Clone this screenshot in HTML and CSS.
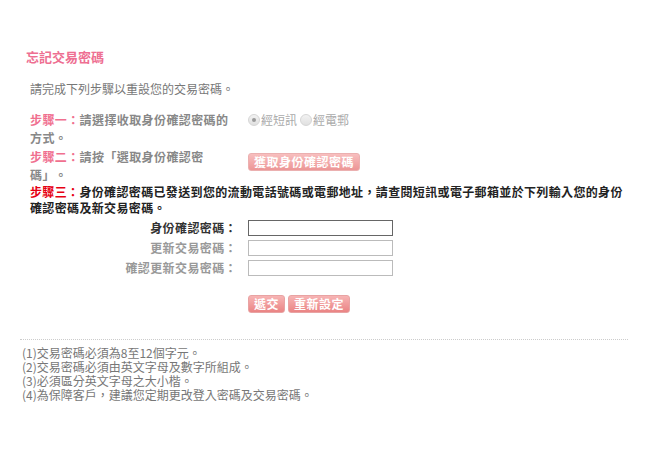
FILE: index.html
```html
<!DOCTYPE html>
<html lang="zh-Hant">
<head>
    <meta charset="UTF-8">
    <title>忘記交易密碼</title>
    <link rel="stylesheet" href="styles.css">
</head>
<body>
    <div class="page">
        <h1 class="title">忘記交易密碼</h1>
        <p class="intro">請完成下列步驟以重設您的交易密碼。</p>

        <div class="step">
            <div class="step-text"><span class="step-no">步驟一：</span>請選擇收取身份確認密碼的方式。</div>
            <div class="step-ctl">
                <label class="radio"><span class="dot checked"></span>經短訊</label>
                <label class="radio"><span class="dot"></span>經電郵</label>
            </div>
        </div>
        <div class="step">
            <div class="step-text"><span class="step-no">步驟二：</span>請按「選取身份確認密碼」。</div>
            <div class="step-ctl">
                <button class="btn btn-wide">獲取身份確認密碼</button>
            </div>
        </div>
        <div class="step3"><span class="step-no red">步驟三：</span>身份確認密碼已發送到您的流動電話號碼或電郵地址，請查閱短訊或電子郵箱並於下列輸入您的身份確認密碼及新交易密碼。</div>

        <div class="form">
            <label class="form-label active">身份確認密碼：</label>
            <input class="field active" type="text">
            <label class="form-label">更新交易密碼：</label>
            <input class="field" type="password">
            <label class="form-label">確認更新交易密碼：</label>
            <input class="field" type="password">
        </div>

        <div class="actions">
            <button class="btn">遞交</button>
            <button class="btn">重新設定</button>
        </div>

        <ol class="notes">
            <li>(1)交易密碼必須為8至12個字元。</li>
            <li>(2)交易密碼必須由英文字母及數字所組成。</li>
            <li>(3)必須區分英文字母之大小楷。</li>
            <li>(4)為保障客戶，建議您定期更改登入密碼及交易密碼。</li>
        </ol>
    </div>
</body>
</html>
```

FILE: styles.css
```css
body {
    margin: 0;
    padding: 0;
    background: #fff;
    font-family: "Noto Sans CJK TC", "Liberation Sans", sans-serif;
    font-size: 12px;
    color: #777;
    text-spacing-trim: space-all;
}
.page {
    padding: 48px 22px 0 20px;
}
.title {
    margin: 0 0 0 6px;
    font-size: 13px;
    line-height: 18px;
    color: #ee6f92;
    font-weight: bold;
}
.intro {
    margin: 15px 0 0 10px;
    line-height: 16px;
    color: #777;
}
.step {
    display: grid;
    grid-template-columns: 218px auto;
    margin: 14px 0 0 10px;
    align-items: start;
}
.step + .step {
    margin-top: 1px;
}
.step-text {
    width: 206px;
    font-weight: bold;
    line-height: 18px;
    letter-spacing: 0.4px;
    color: #888;
}
.step-no {
    color: #f0708f;
}
.step-no.red {
    color: #e60012;
}
.step-ctl {
    display: flex;
    align-items: center;
    gap: 3px;
    color: #aaa;
}
.radio {
    display: flex;
    align-items: center;
    gap: 1px;
    line-height: 18px;
}
.dot {
    width: 10px;
    height: 10px;
    border-radius: 50%;
    border: 1px solid #d6d6d6;
    background: linear-gradient(#f2f2f2, #e0e0e0);
    position: relative;
}
.dot.checked::after {
    content: "";
    position: absolute;
    left: 3px;
    top: 3px;
    width: 4px;
    height: 4px;
    border-radius: 50%;
    background: #9a9a9a;
}
.btn {
    font-family: inherit;
    font-size: 12px;
    font-weight: bold;
    color: #fff;
    height: 18px;
    line-height: 14px;
    padding: 0 5px;
    border: 1px solid #e8a3a3;
    border-radius: 3px;
    background: linear-gradient(#f7b4b4, #ea8484);
    letter-spacing: 0.5px;
    cursor: pointer;
}
.btn-wide {
    width: 112px;
    margin-top: 5px;
    opacity: 0.85;
}
.step3 {
    margin: 0 0 0 10px;
    width: 596px;
    font-weight: bold;
    line-height: 16px;
    letter-spacing: 0.35px;
    color: #222;
}
.form {
    display: grid;
    grid-template-columns: 218px 155px;
    row-gap: 4px;
    margin: 4px 0 0 0;
    align-items: center;
}
.form-label {
    text-align: right;
    padding-right: 1px;
    font-weight: bold;
    line-height: 16px;
    letter-spacing: 0.4px;
    color: #999;
}
.form-label.active {
    color: #333;
}
.field {
    box-sizing: border-box;
    width: 145px;
    height: 16px;
    margin: 0 0 0 10px;
    border: 1px solid #bbb;
    padding: 0 2px;
}
.field.active {
    border-color: #666;
}
.actions {
    display: flex;
    gap: 3px;
    margin: 19px 0 0 228px;
}
.notes {
    list-style: none;
    margin: 26px 0 0 0;
    padding: 6px 0 0 2px;
    border-top: 1px dotted #ccc;
    line-height: 14px;
    color: #777;
}
```
